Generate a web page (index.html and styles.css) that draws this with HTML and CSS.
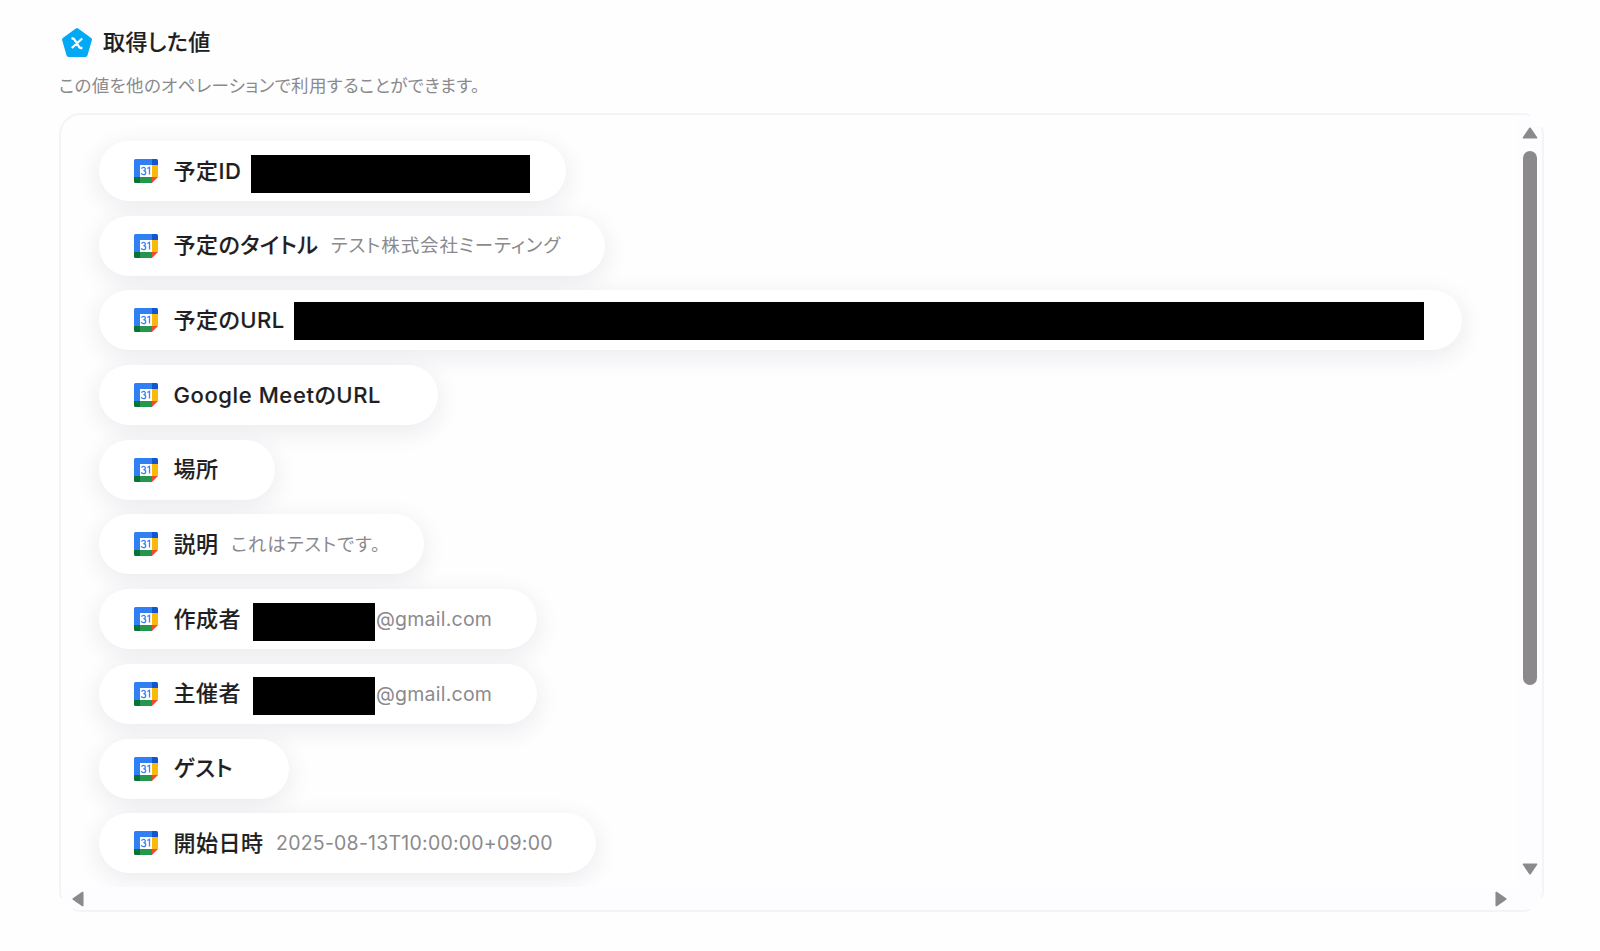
FILE: index.html
```html
<!DOCTYPE html>
<html lang="ja">
<head>
    <meta charset="UTF-8">
    <meta name="viewport" content="width=device-width, initial-scale=1.0">
    <title>取得した値</title>
    <link rel="stylesheet" href="styles.css">
</head>
<body>
    <svg class="defs" width="0" height="0">
        <symbol id="calendar" viewBox="0 0 24 24">
            <path d="M1.5 0H18v6H6v12H0V1.5A1.5 1.5 0 0 1 1.5 0z" fill="#2f80f5"/>
            <path d="M18 0h4.500a1.500 1.500 0 0 1 1.500 1.500V6h-6z" fill="#1256cf"/>
            <path d="M18 6h6v12h-6z" fill="#fbb90a"/>
            <path d="M0 18h6v6H1.500A1.500 1.500 0 0 1 0 22.500z" fill="#0b7136"/>
            <path d="M6 18h12v6H6z" fill="#25964d"/>
            <path d="M18 18h6l-6 6z" fill="#f04b35"/>
            <path d="M6 6h12v12H6z" fill="#fff"/>
            <path d="M7.600 9.800q.5-1.500 2-1.500t1.800 1.600q0 1.700-2 1.800 2.300.1 2.300 2 0 1.900-2.200 1.900-1.700 0-2.200-1.500M13.300 9.500l2.200-1.200v7.300" fill="none" stroke="#3c83f3" stroke-width="1.300"/>
        </symbol>
    </svg>
    <header>
        <h1>
            <svg class="logo" viewBox="0 0 32 32">
                <path d="M16 3 29 12.5 24.5 28h-17L3 12.5z" fill="#03a9f4" stroke="#03a9f4" stroke-width="4" stroke-linejoin="round"/>
                <path d="M10.500 11.500h1.300q1 0 1.600 1l4.800 7.500q.6 1 1.600 1h1.600M21.200 11.500l-10.400 9.500" fill="none" stroke="#fff" stroke-width="2.300"/>
            </svg>
            <span>取得した値</span>
        </h1>
        <p>この値を他のオペレーションで利用することができます。</p>
    </header>
    <main class="panel">
        <ul class="values">
            <li class="pill w-id"><svg class="icon"><use href="#calendar"/></svg><b>予定ID</b><i class="mask mask-id"></i></li>
            <li class="pill w-title"><svg class="icon"><use href="#calendar"/></svg><b>予定のタイトル</b><span>テスト株式会社ミーティング</span></li>
            <li class="pill w-url"><svg class="icon"><use href="#calendar"/></svg><b>予定のURL</b><i class="mask mask-url"></i></li>
            <li class="pill w-meet"><svg class="icon"><use href="#calendar"/></svg><b>Google MeetのURL</b></li>
            <li class="pill w-place"><svg class="icon"><use href="#calendar"/></svg><b>場所</b></li>
            <li class="pill w-desc"><svg class="icon"><use href="#calendar"/></svg><b>説明</b><span>これはテストです。</span></li>
            <li class="pill w-mail"><svg class="icon"><use href="#calendar"/></svg><b>作成者</b><i class="mask mask-mail"></i><span class="mail">@gmail.com</span></li>
            <li class="pill w-mail"><svg class="icon"><use href="#calendar"/></svg><b>主催者</b><i class="mask mask-mail"></i><span class="mail">@gmail.com</span></li>
            <li class="pill w-guest"><svg class="icon"><use href="#calendar"/></svg><b>ゲスト</b></li>
            <li class="pill w-start"><svg class="icon"><use href="#calendar"/></svg><b>開始日時</b><span class="date">2025-08-13T10:00:00+09:00</span></li>
        </ul>
        <div class="bar-v">
            <svg class="arrow" viewBox="0 0 16 12"><path d="M8 2l5.500 8h-11z"/></svg>
            <div class="thumb"></div>
            <svg class="arrow arrow-down" viewBox="0 0 16 12"><path d="M8 10l5.500-8h-11z"/></svg>
        </div>
        <div class="bar-h">
            <svg class="arrow-side" viewBox="0 0 12 16"><path d="M2 8l8-5.500v11z"/></svg>
            <svg class="arrow-side" viewBox="0 0 12 16"><path d="M10 8L2 2.500v11z"/></svg>
        </div>
        <div class="corner corner-tr"></div>
        <div class="corner corner-br"></div>
        <div class="corner corner-bl"></div>
    </main>
</body>
</html>
```
FILE: styles.css
```css
* {
    box-sizing: border-box;
}
body {
    margin: 0;
    padding: 26px 56px 0 59px;
    height: 951px;
    overflow: hidden;
    background-color: #fefefe;
    color: #1f1f23;
    font-family: Inter, "Noto Sans CJK JP", sans-serif;
    font-feature-settings: "palt";
}
.defs {
    position: absolute;
}
h1 {
    display: flex;
    align-items: center;
    gap: 10px;
    height: 32px;
    margin: 0 0 0 2px;
    font-size: 22px;
    font-weight: 500;
    letter-spacing: 0.4px;
    line-height: 32px;
    -webkit-text-stroke: 0.15px #1f1f23;
}
.logo {
    width: 32px;
    height: 32px;
    margin-top: 2px;
}
header p {
    height: 26px;
    margin: 15px 0 14px;
    color: #8b8a8e;
    font-size: 17.5px;
    letter-spacing: 0.35px;
    line-height: 26px;
}
.panel {
    position: relative;
    display: grid;
    grid-template-columns: 1fr 24px;
    grid-template-rows: 772px 23px;
    height: 799px;
    border: 2px solid #f4f3f6;
    border-radius: 22px;
    background-color: #fefefe;
}
.values {
    display: flex;
    flex-direction: column;
    align-items: flex-start;
    gap: 14.7px;
    margin: 0;
    padding: 26px 0 0 38px;
    overflow: hidden;
    list-style: none;
}
.pill {
    display: flex;
    flex-shrink: 0;
    align-items: center;
    height: 60px;
    padding-left: 34.5px;
    border-radius: 30px;
    background-color: #fff;
    box-shadow: 0 6px 24px rgba(60, 40, 80, 0.1);
    white-space: nowrap;
}
.icon {
    flex-shrink: 0;
    width: 24px;
    height: 24px;
    margin-right: 16px;
}
.pill b {
    margin-right: 12.5px;
    padding-bottom: 5px;
    font-size: 22px;
    font-weight: 500;
    letter-spacing: 0.5px;
    -webkit-text-stroke: 0.15px #1f1f23;
}
.pill span {
    padding-bottom: 3px;
    color: #8b8a8e;
    font-size: 18.5px;
    letter-spacing: 0.9px;
}
.w-id { width: 467px; }
.w-title { width: 506px; }
.w-url { width: 1363px; }
.w-meet { width: 339px; }
.w-meet b {
    padding-bottom: 4px;
    letter-spacing: 0.6px;
}
.w-place { width: 176px; }
.w-desc { width: 325px; }
.w-mail { width: 438px; }
.w-guest { width: 190px; }
.w-start { width: 497px; }
.mask {
    flex-shrink: 0;
    height: 38px;
    margin-top: 5px;
    margin-left: -3px;
    background-color: #000;
}
.mask-id { width: 279px; }
.mask-url {
    width: 1130px;
    margin-top: 1px;
}
.mask-mail {
    width: 122px;
    margin-right: 1px;
    margin-left: -0.5px;
}
.pill .mail, .pill .date {
    padding-bottom: 0;
    font-size: 19.5px;
    letter-spacing: 0.23px;
}
.bar-v {
    display: flex;
    flex-direction: column;
    align-items: center;
    padding-top: 11px;
    background-color: #fdfcfe;
    border-radius: 0 20px 0 0;
}
.thumb {
    width: 14px;
    height: 534px;
    margin-top: 11px;
    border-radius: 7px;
    background-color: #8b898c;
}
.arrow {
    width: 20px;
    height: 14px;
}
.arrow-down {
    margin-top: auto;
    margin-bottom: 11px;
}
.arrow path, .arrow-side path {
    fill: #8b898c;
    stroke: #8b898c;
    stroke-width: 1.5;
    stroke-linejoin: round;
}
.bar-h {
    position: relative;
    z-index: 1;
    display: flex;
    grid-column: 1 / 3;
    align-items: center;
    justify-content: space-between;
    padding: 0 34px 0 10px;
    background-color: #fdfcfe;
    border-radius: 0 0 20px 20px;
}
.arrow-side {
    width: 14px;
    height: 20px;
}
/* the scrollbars hide the border at these corners */
.corner {
    position: absolute;
    width: 14px;
    height: 14px;
    background-color: #fefefe;
}
.corner-tr { top: -2px; right: -2px; }
.corner-br { right: -2px; bottom: -2px; }
.corner-bl { bottom: -2px; left: -2px; }
```
